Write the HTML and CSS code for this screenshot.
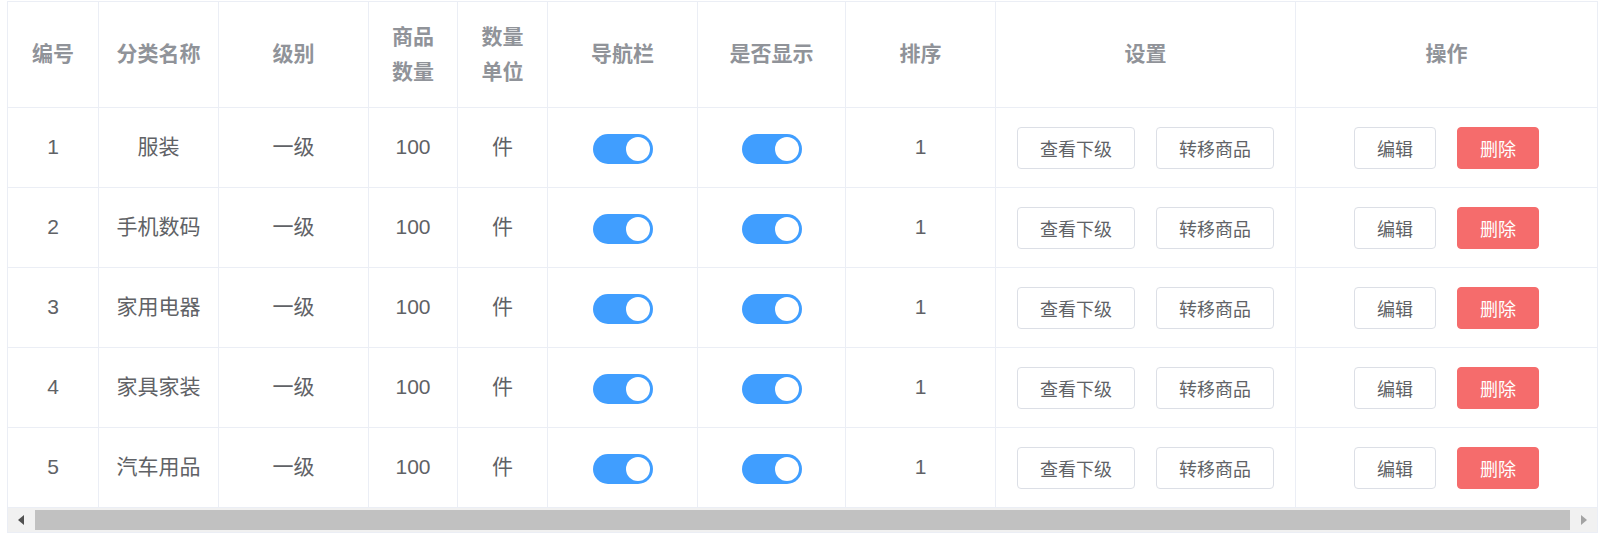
FILE: index.html
```html
<!DOCTYPE html>
<html lang="zh-CN">
<head>
<meta charset="UTF-8">
<meta name="viewport" content="width=device-width, initial-scale=1.0">
<title>商品分类</title>
<link rel="stylesheet" href="styles.css">
</head>
<body>
<div class="table-wrap">
    <table class="cat-table">
        <colgroup>
            <col class="w91">
            <col class="w120">
            <col class="w150">
            <col class="w89">
            <col class="w90">
            <col class="w150">
            <col class="w148">
            <col class="w150">
            <col class="w300">
            <col class="w301">
        </colgroup>
        <thead>
            <tr>
                <th>编号</th>
                <th>分类名称</th>
                <th>级别</th>
                <th>商品数量</th>
                <th>数量单位</th>
                <th>导航栏</th>
                <th>是否显示</th>
                <th>排序</th>
                <th>设置</th>
                <th class="last">操作</th>
            </tr>
        </thead>
        <tbody id="cat-list">
            <tr>
                <td>1</td>
                <td>服装</td>
                <td>一级</td>
                <td>100</td>
                <td>件</td>
                <td><span class="switch is-on"></span></td>
                <td><span class="switch is-on"></span></td>
                <td>1</td>
                <td><div class="btn-row"><button class="btn">查看下级</button><button class="btn">转移商品</button></div></td>
                <td class="last"><div class="btn-row"><button class="btn">编辑</button><button class="btn btn-danger">删除</button></div></td>
            </tr>
            <tr>
                <td>2</td>
                <td>手机数码</td>
                <td>一级</td>
                <td>100</td>
                <td>件</td>
                <td><span class="switch is-on"></span></td>
                <td><span class="switch is-on"></span></td>
                <td>1</td>
                <td><div class="btn-row"><button class="btn">查看下级</button><button class="btn">转移商品</button></div></td>
                <td class="last"><div class="btn-row"><button class="btn">编辑</button><button class="btn btn-danger">删除</button></div></td>
            </tr>
            <tr>
                <td>3</td>
                <td>家用电器</td>
                <td>一级</td>
                <td>100</td>
                <td>件</td>
                <td><span class="switch is-on"></span></td>
                <td><span class="switch is-on"></span></td>
                <td>1</td>
                <td><div class="btn-row"><button class="btn">查看下级</button><button class="btn">转移商品</button></div></td>
                <td class="last"><div class="btn-row"><button class="btn">编辑</button><button class="btn btn-danger">删除</button></div></td>
            </tr>
            <tr>
                <td>4</td>
                <td>家具家装</td>
                <td>一级</td>
                <td>100</td>
                <td>件</td>
                <td><span class="switch is-on"></span></td>
                <td><span class="switch is-on"></span></td>
                <td>1</td>
                <td><div class="btn-row"><button class="btn">查看下级</button><button class="btn">转移商品</button></div></td>
                <td class="last"><div class="btn-row"><button class="btn">编辑</button><button class="btn btn-danger">删除</button></div></td>
            </tr>
            <tr>
                <td>5</td>
                <td>汽车用品</td>
                <td>一级</td>
                <td>100</td>
                <td>件</td>
                <td><span class="switch is-on"></span></td>
                <td><span class="switch is-on"></span></td>
                <td>1</td>
                <td><div class="btn-row"><button class="btn">查看下级</button><button class="btn">转移商品</button></div></td>
                <td class="last"><div class="btn-row"><button class="btn">编辑</button><button class="btn btn-danger">删除</button></div></td>
            </tr>
        </tbody>
    </table>
    <div class="hscroll">
        <span class="hscroll-btn"><span class="arrow-left"></span></span>
        <span class="hscroll-thumb"></span>
        <span class="hscroll-btn"><span class="arrow-right"></span></span>
    </div>
</div>
</body>
</html>
```

FILE: styles.css
```css
body {
    margin: 0;
    background: #fff;
    font-family: "Liberation Sans", "Noto Sans CJK SC", sans-serif;
}

.table-wrap {
    width: 1589px;
    margin: 1px 0 0 7px;
    border: 1px solid #ebeef5;
}

.cat-table {
    width: 1589px;
    table-layout: fixed;
    border-collapse: separate;
    border-spacing: 0;
}

.w89 { width: 89px; }
.w90 { width: 90px; }
.w91 { width: 91px; }
.w120 { width: 120px; }
.w148 { width: 148px; }
.w150 { width: 150px; }
.w300 { width: 300px; }
.w301 { width: 301px; }

th, td {
    padding: 0 15px;
    text-align: center;
    vertical-align: middle;
    border-right: 1px solid #ebeef5;
    border-bottom: 1px solid #ebeef5;
}

th.last, td.last {
    border-right: none;
}

th {
    height: 105px;
    font-size: 21px;
    line-height: 34.5px;
    font-weight: bold;
    color: #909399;
}

td {
    height: 79px;
    font-size: 21px;
    line-height: 34.5px;
    color: #606266;
}

.switch {
    display: inline-block;
    position: relative;
    width: 60px;
    height: 30px;
    border-radius: 15px;
    background: #409eff;
    vertical-align: middle;
}

.switch::after {
    content: "";
    position: absolute;
    top: 3px;
    right: 3px;
    width: 24px;
    height: 24px;
    border-radius: 50%;
    background: #fff;
}

.btn-row {
    display: flex;
    justify-content: center;
    gap: 21px;
}

.btn {
    height: 42px;
    padding: 0 22px;
    font-family: "Liberation Sans", "Noto Sans CJK SC", sans-serif;
    font-size: 18px;
    color: #606266;
    background: #fff;
    border: 1px solid #dcdfe6;
    border-radius: 4px;
    cursor: pointer;
}

.btn-danger {
    color: #fff;
    background: #f56c6c;
    border-color: #f56c6c;
}

.hscroll {
    display: flex;
    align-items: center;
    height: 24px;
    background: #f1f1f1;
}

.hscroll-btn {
    display: flex;
    align-items: center;
    justify-content: center;
    width: 26px;
    height: 24px;
}

.hscroll-thumb {
    flex: 1;
    height: 20px;
    margin: 0 1px;
    background: #c1c1c1;
}

.arrow-left {
    border-top: 5px solid transparent;
    border-bottom: 5px solid transparent;
    border-right: 6px solid #505050;
}

.arrow-right {
    border-top: 5px solid transparent;
    border-bottom: 5px solid transparent;
    border-left: 6px solid #a3a3a3;
}
```
